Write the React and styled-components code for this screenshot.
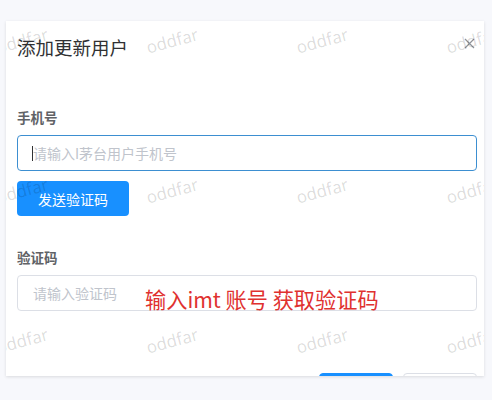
import React from "react";
import styled, { createGlobalStyle } from "styled-components";

const Global = createGlobalStyle`
  html, body {
    margin: 0;
    padding: 0;
    background: #f7f8fc;
    font-family: "Noto Sans CJK SC", "Noto Sans", sans-serif;
  }
`;

const Page = styled.div`
  width: 492px;
  height: 400px;
  padding: 21px 8px 0 6px;
  box-sizing: border-box;
`;

const Dialog = styled.div`
  position: relative;
  width: 478px;
  height: 355px;
  background: #fff;
  box-shadow: 0 1px 3px rgba(0, 0, 0, 0.12);
  overflow: hidden;
  padding: 14px 7px 0 11px;
  box-sizing: border-box;
  display: flex;
  flex-direction: column;
`;

const Header = styled.div`
  display: flex;
  align-items: center;
  justify-content: space-between;
  height: 24px;
`;

const Title = styled.span`
  font-size: 18.5px;
  line-height: 24px;
  color: #303133;
`;

const Close = styled.button`
  border: 0;
  background: none;
  padding: 0;
  width: 14px;
  height: 14px;
  margin-right: 1px;
  margin-top: -8px;
  display: flex;
  align-items: center;
  justify-content: center;
  color: #909399;
`;

const Body = styled.div`
  display: flex;
  flex-direction: column;
  padding-top: 48px;
`;

const Field = styled.div`
  display: flex;
  flex-direction: column;
  margin-top: ${(p) => p.$gap || 0}px;
`;

const Label = styled.label`
  font-size: 13.5px;
  line-height: 20px;
  font-weight: 700;
  color: #606266;
  margin-bottom: 8px;
`;

const InputWrap = styled.div`
  position: relative;
`;

const Input = styled.input`
  display: block;
  width: 100%;
  height: 36px;
  box-sizing: border-box;
  border: 1px solid ${(p) => (p.$focused ? "#3d8fd1" : "#dcdfe6")};
  border-radius: 4px;
  padding: 0 15px;
  font-family: inherit;
  font-size: 14px;
  color: #606266;
  outline: none;
  background: #fff;

  &::placeholder {
    color: #c0c4cc;
  }
`;

const Caret = styled.span`
  position: absolute;
  left: 15px;
  top: 11px;
  width: 1px;
  height: 15px;
  background: #303133;
`;

const Note = styled.span`
  position: absolute;
  left: 128px;
  top: 10px;
  font-size: 21.2px;
  line-height: 28px;
  color: #e0312f;
  white-space: nowrap;
`;

const SendButton = styled.button`
  align-self: flex-start;
  margin-top: 10px;
  width: 112px;
  height: 35px;
  border: 0;
  border-radius: 4px;
  background: #1890ff;
  color: #fff;
  font-family: inherit;
  font-size: 14px;
`;

const Footer = styled.div`
  display: flex;
  justify-content: flex-end;
  gap: 10px;
  margin-top: 62px;
`;

const FooterButton = styled.button`
  width: 74px;
  height: 32px;
  border-radius: 4px;
  border: 1px solid ${(p) => (p.$primary ? "#1890ff" : "#dcdfe6")};
  background: ${(p) => (p.$primary ? "#1890ff" : "#fff")};
  color: ${(p) => (p.$primary ? "#fff" : "#606266")};
  font-family: inherit;
  font-size: 14px;
`;

const Watermarks = styled.div`
  position: absolute;
  left: -59px;
  top: -56px;
  display: grid;
  grid-template-columns: repeat(4, 150px);
  grid-auto-rows: 150px;
  pointer-events: none;
`;

const Mark = styled.span`
  display: flex;
  align-items: center;
  justify-content: center;
  font-family: "Open Sans", "Noto Sans", sans-serif;
  font-size: 17px;
  color: rgba(0, 0, 0, 0.15);
  transform: rotate(-15deg);
`;

export default function App() {
  const marks = Array.from({ length: 12 });
  return (
    <Page>
      <Global />
      <Dialog>
        <Header>
          <Title>添加更新用户</Title>
          <Close aria-label="关闭">
            <svg width="11" height="11" viewBox="0 0 11 11">
              <path d="M1 1L10 10M10 1L1 10" stroke="currentColor" strokeWidth="1.2" />
            </svg>
          </Close>
        </Header>
        <Body>
          <Field>
            <Label>手机号</Label>
            <InputWrap>
              <Input $focused placeholder="请输入I茅台用户手机号" />
              <Caret />
            </InputWrap>
          </Field>
          <SendButton>发送验证码</SendButton>
          <Field $gap={31}>
            <Label>验证码</Label>
            <InputWrap>
              <Input placeholder="请输入验证码" />
              <Note>输入imt 账号 获取验证码</Note>
            </InputWrap>
          </Field>
          <Footer>
            <FooterButton $primary>确定</FooterButton>
            <FooterButton>取消</FooterButton>
          </Footer>
        </Body>
        <Watermarks>
          {marks.map((_, i) => (
            <Mark key={i}>oddfar</Mark>
          ))}
        </Watermarks>
      </Dialog>
    </Page>
  );
}
